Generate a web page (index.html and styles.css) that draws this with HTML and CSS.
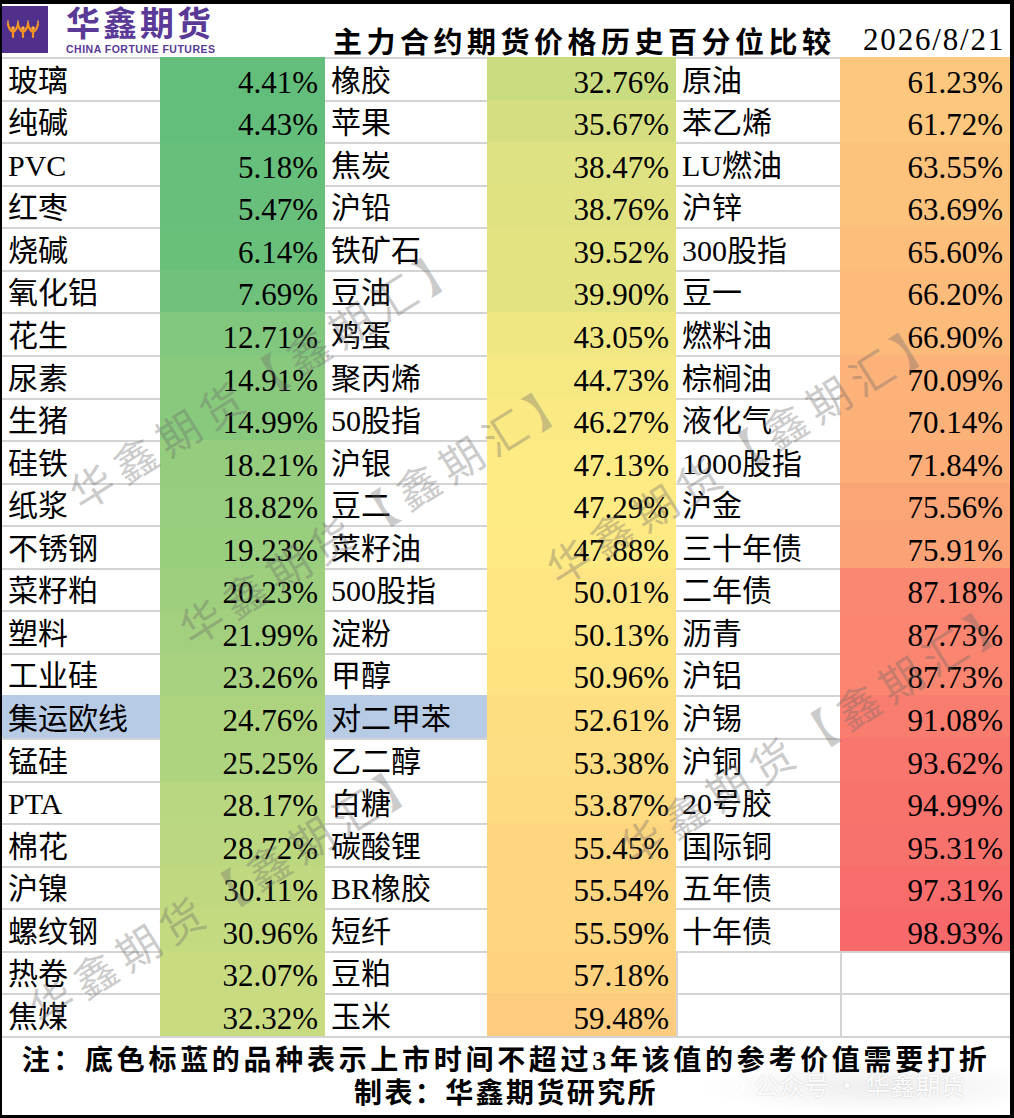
FILE: index.html
```
<!DOCTYPE html>
<html lang="zh-CN">
<head>
<meta charset="utf-8">
<title>主力合约期货价格历史百分位比较</title>
<link rel="stylesheet" href="styles.css">
</head>
<body>
<div class="sheet">
  <div class="header">
    <div class="brand">
      <div class="mark">
        <svg viewBox="0 0 46 47" width="46" height="47">
          <g fill="none" stroke="#f7941d" stroke-width="2.2" stroke-linecap="round">
            <path d="M11 31 L11 24 M11 26 Q7 24 6 18 M11 26 Q15 24 16 18"/>
            <path d="M21 31 L21 24 M21 26 Q17 24 16 18 M21 26 Q25 24 26 18"/>
            <path d="M31 31 L31 24 M31 26 Q27 24 26 18 M31 26 Q35 24 36 18"/>
          </g>
          <g fill="#fbb040">
            <circle cx="11" cy="22" r="1.8"/><circle cx="21" cy="22" r="1.8"/><circle cx="31" cy="22" r="1.8"/>
            <path d="M6 18 Q4.5 15.5 6 13.5 Q7.5 15.5 6 18Z"/>
            <path d="M16 18 Q14.5 15.5 16 13.5 Q17.5 15.5 16 18Z"/>
            <path d="M26 18 Q24.5 15.5 26 13.5 Q27.5 15.5 26 18Z"/>
            <path d="M36 18 Q34.5 15.5 36 13.5 Q37.5 15.5 36 18Z"/>
          </g>
        </svg>
      </div>
      <div class="brand-text">
        <div class="brand-cn">华鑫期货</div>
        <div class="brand-en">CHINA FORTUNE FUTURES</div>
      </div>
    </div>
    <div class="title">主力合约期货价格历史百分位比较</div>
    <div class="date">2026/8/21</div>
  </div>

  <div class="grid">
    <div class="name">玻璃</div><div class="val">4.41%</div><div class="name">橡胶</div><div class="val">32.76%</div><div class="name">原油</div><div class="val">61.23%</div>
    <div class="name">纯碱</div><div class="val">4.43%</div><div class="name">苹果</div><div class="val">35.67%</div><div class="name">苯乙烯</div><div class="val">61.72%</div>
    <div class="name">PVC</div><div class="val">5.18%</div><div class="name">焦炭</div><div class="val">38.47%</div><div class="name">LU燃油</div><div class="val">63.55%</div>
    <div class="name">红枣</div><div class="val">5.47%</div><div class="name">沪铅</div><div class="val">38.76%</div><div class="name">沪锌</div><div class="val">63.69%</div>
    <div class="name">烧碱</div><div class="val">6.14%</div><div class="name">铁矿石</div><div class="val">39.52%</div><div class="name">300股指</div><div class="val">65.60%</div>
    <div class="name">氧化铝</div><div class="val">7.69%</div><div class="name">豆油</div><div class="val">39.90%</div><div class="name">豆一</div><div class="val">66.20%</div>
    <div class="name">花生</div><div class="val">12.71%</div><div class="name">鸡蛋</div><div class="val">43.05%</div><div class="name">燃料油</div><div class="val">66.90%</div>
    <div class="name">尿素</div><div class="val">14.91%</div><div class="name">聚丙烯</div><div class="val">44.73%</div><div class="name">棕榈油</div><div class="val">70.09%</div>
    <div class="name">生猪</div><div class="val">14.99%</div><div class="name">50股指</div><div class="val">46.27%</div><div class="name">液化气</div><div class="val">70.14%</div>
    <div class="name">硅铁</div><div class="val">18.21%</div><div class="name">沪银</div><div class="val">47.13%</div><div class="name">1000股指</div><div class="val">71.84%</div>
    <div class="name">纸浆</div><div class="val">18.82%</div><div class="name">豆二</div><div class="val">47.29%</div><div class="name">沪金</div><div class="val">75.56%</div>
    <div class="name">不锈钢</div><div class="val">19.23%</div><div class="name">菜籽油</div><div class="val">47.88%</div><div class="name">三十年债</div><div class="val">75.91%</div>
    <div class="name">菜籽粕</div><div class="val">20.23%</div><div class="name">500股指</div><div class="val">50.01%</div><div class="name">二年债</div><div class="val">87.18%</div>
    <div class="name">塑料</div><div class="val">21.99%</div><div class="name">淀粉</div><div class="val">50.13%</div><div class="name">沥青</div><div class="val">87.73%</div>
    <div class="name">工业硅</div><div class="val">23.26%</div><div class="name">甲醇</div><div class="val">50.96%</div><div class="name">沪铝</div><div class="val">87.73%</div>
    <div class="name hl">集运欧线</div><div class="val">24.76%</div><div class="name hl">对二甲苯</div><div class="val">52.61%</div><div class="name">沪锡</div><div class="val">91.08%</div>
    <div class="name">锰硅</div><div class="val">25.25%</div><div class="name">乙二醇</div><div class="val">53.38%</div><div class="name">沪铜</div><div class="val">93.62%</div>
    <div class="name">PTA</div><div class="val">28.17%</div><div class="name">白糖</div><div class="val">53.87%</div><div class="name">20号胶</div><div class="val">94.99%</div>
    <div class="name">棉花</div><div class="val">28.72%</div><div class="name">碳酸锂</div><div class="val">55.45%</div><div class="name">国际铜</div><div class="val">95.31%</div>
    <div class="name">沪镍</div><div class="val">30.11%</div><div class="name">BR橡胶</div><div class="val">55.54%</div><div class="name">五年债</div><div class="val">97.31%</div>
    <div class="name">螺纹钢</div><div class="val">30.96%</div><div class="name">短纤</div><div class="val">55.59%</div><div class="name">十年债</div><div class="val">98.93%</div>
    <div class="name">热卷</div><div class="val">32.07%</div><div class="name">豆粕</div><div class="val">57.18%</div><div class="empty"></div><div class="empty"></div>
    <div class="name">焦煤</div><div class="val">32.32%</div><div class="name">玉米</div><div class="val">59.48%</div><div class="empty"></div><div class="empty"></div>
  </div>

  <div class="footer">
    <p class="note">注：底色标蓝的品种表示上市时间不超过3年该值的参考价值需要打折</p>
    <p class="credit">制表：华鑫期货研究所</p>
  </div>

  <div class="wm wm1">华鑫期货【鑫期汇】</div>
  <div class="wm wm2">华鑫期货【鑫期汇】</div>
  <div class="wm wm3">华鑫期货【鑫期汇】</div>
  <div class="wm wm4">华鑫期货【鑫期汇】</div>
  <div class="wm wm5">华鑫期货【鑫期汇】</div>

  <div class="wx">
    <svg viewBox="0 0 26 22" width="26" height="22">
      <g fill="none" stroke="#ffffff" stroke-width="1.6">
        <ellipse cx="10" cy="9" rx="8.5" ry="7"/>
        <ellipse cx="17" cy="14" rx="7" ry="5.8"/>
      </g>
    </svg>
    <span>公众号 · 华鑫期货</span>
  </div>
</div>
<script src="script.js"></script>
</body>
</html>
```

FILE: styles.css
```
body {
  margin: 0;
  background: #ffffff;
}

.sheet {
  position: relative;
  width: 1014px;
  height: 1118px;
  box-sizing: border-box;
  border-style: solid;
  border-color: #000000;
  border-width: 4px 4px 3px 2px;
  display: flex;
  flex-direction: column;
  overflow: hidden;
  background: #ffffff;
  color: #000000;
  font-family: "Liberation Serif", "Noto Sans CJK SC", serif;
}

/* ---------- header ---------- */
.header {
  height: 53px;
  flex: none;
  display: flex;
}

.brand {
  width: 331px;
  flex: none;
  display: flex;
}

.mark {
  width: 46px;
  height: 47px;
  margin-top: 2px;
  background: #50308a;
}

.mark svg {
  display: block;
}

.brand-text {
  margin-left: 18px;
  color: #5a3a96;
}

.brand-cn {
  font-family: "Noto Sans CJK SC", sans-serif;
  font-weight: 700;
  font-size: 34px;
  line-height: 36px;
  letter-spacing: 3px;
  white-space: nowrap;
}

.brand-en {
  font-family: "Liberation Sans", sans-serif;
  font-weight: 700;
  font-size: 10.5px;
  line-height: 11px;
  letter-spacing: 0.5px;
  margin-top: 4px;
  white-space: nowrap;
}

.title {
  align-self: flex-end;
  padding-bottom: 2px;
  font-family: "Noto Sans CJK SC", sans-serif;
  font-weight: 700;
  font-size: 29px;
  line-height: 30px;
  letter-spacing: 4.5px;
  white-space: nowrap;
}

.date {
  margin-left: auto;
  align-self: flex-end;
  padding: 0 5px 2px 0;
  font-size: 31px;
  line-height: 31px;
  letter-spacing: 1.8px;
  white-space: nowrap;
}

/* ---------- table ---------- */
.grid {
  flex: none;
  height: 979px;
  display: grid;
  grid-template-columns: 158px 165px 162px 189px 164px 170px;
  grid-template-rows: repeat(23, 1fr);
}

.name {
  box-sizing: border-box;
  border-top: 2px solid #d4d4d4;
  display: flex;
  align-items: flex-end;
  padding: 0 0 3px 6px;
  font-size: 30px;
  line-height: 32px;
  white-space: nowrap;
}

.name.hl {
  background: #b7cbe4;
  border-top-color: transparent;
}

.val {
  box-sizing: border-box;
  display: flex;
  align-items: flex-end;
  justify-content: flex-end;
  padding: 0 7px 1px 0;
  font-size: 31px;
  line-height: 32px;
  white-space: nowrap;
}

.empty {
  box-sizing: border-box;
  border-top: 2px solid #d4d4d4;
  border-left: 2px solid #d4d4d4;
}

/* ---------- footer ---------- */
.footer {
  flex: 1;
  border-top: 2px solid #d4d4d4;
  display: flex;
  flex-direction: column;
  align-items: center;
  justify-content: center;
  font-weight: 700;
  font-size: 28px;
  line-height: 33px;
}

.footer p {
  margin: 0;
  white-space: nowrap;
}

.note {
  letter-spacing: 3.7px;
}

.credit {
  letter-spacing: 2.4px;
}

/* ---------- overlays ---------- */
.wm {
  position: absolute;
  font-family: "Noto Sans CJK SC", sans-serif;
  font-size: 43px;
  line-height: 44px;
  letter-spacing: 8px;
  color: rgba(105, 105, 105, 0.34);
  white-space: nowrap;
  transform-origin: 21px 22px;
  transform: rotate(-32deg);
  pointer-events: none;
}

.wm1 { left: 67px;  top: 459px; }
.wm2 { left: 177px; top: 594px; }
.wm3 { left: 27px;  top: 974px; }
.wm4 { left: 544px; top: 534px; }
.wm5 { left: 617px; top: 814px; }

.wx {
  position: absolute;
  left: 696px;
  top: 1054px;
  width: 330px;
  height: 52px;
  box-sizing: border-box;
  padding-left: 22px;
  display: flex;
  align-items: center;
  gap: 8px;
  font-family: "Noto Sans CJK SC", sans-serif;
  font-size: 25px;
  color: rgba(255, 255, 255, 0.95);
  text-shadow: 0 0 2px rgba(0, 0, 0, 0.18);
  background: radial-gradient(ellipse at 55% 55%, rgba(0, 0, 0, 0.07), rgba(0, 0, 0, 0) 70%);
  white-space: nowrap;
}
```

FILE: script.js
```
(function () {
  var cells = Array.prototype.slice.call(document.querySelectorAll('.val'));
  var vals = cells.map(function (c) { return parseFloat(c.textContent); });
  var sorted = vals.slice().sort(function (a, b) { return a - b; });
  var min = sorted[0];
  var max = sorted[sorted.length - 1];
  var pos = (sorted.length - 1) * 0.5;
  var lo = Math.floor(pos), hi = Math.ceil(pos);
  var mid = sorted[lo] + (sorted[hi] - sorted[lo]) * (pos - lo);
  var g = [99, 190, 123], y = [255, 235, 132], r = [248, 105, 107];
  function mix(a, b, t) {
    return 'rgb(' + a.map(function (v, i) { return Math.round(v + (b[i] - v) * t); }).join(',') + ')';
  }
  cells.forEach(function (c, i) {
    var v = vals[i];
    c.style.backgroundColor = v <= mid
      ? mix(g, y, (v - min) / (mid - min))
      : mix(y, r, (v - mid) / (max - mid));
  });
})();
```
